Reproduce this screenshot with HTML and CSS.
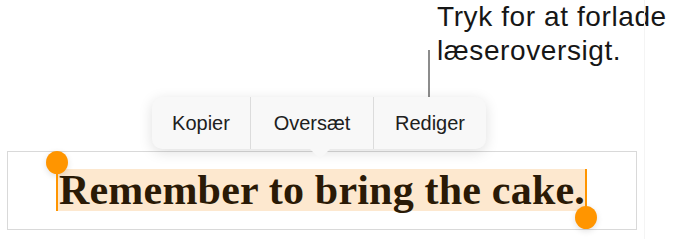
FILE: index.html
```html
<!DOCTYPE html>
<html lang="da">
<head>
<meta charset="utf-8">
<link rel="stylesheet" href="styles.css">
</head>
<body>
<div class="stage">
  <div class="callout">
    <p class="callout-text">Tryk for at forlade<br>læseroversigt.</p>
  </div>
  <div class="edge"></div>
  <div class="field">
    <span class="sel">Remember to bring the cake.</span>
  </div>
  <div class="leader"></div>
  <div class="menu">
    <div class="item item-1">Kopier</div>
    <div class="item item-2">Oversæt</div>
    <div class="item item-3">Rediger</div>
  </div>
  <div class="handle handle-start"><span class="knob"></span><span class="bar"></span></div>
  <div class="handle handle-end"><span class="bar"></span><span class="knob"></span></div>
</div>
</body>
</html>
```
FILE: styles.css
```css
html, body {
  margin: 0;
  padding: 0;
  background: #ffffff;
}
.stage {
  position: relative;
  width: 686px;
  height: 239px;
  overflow: hidden;
  font-family: "Liberation Sans", Arial, sans-serif;
}
.callout {
  padding-left: 437px;
  height: 151px;
}
.callout-text {
  margin: 0;
  padding-top: 0;
  font-size: 28px;
  line-height: 34px;
  letter-spacing: 0.6px;
  color: #161616;
}
.edge {
  position: absolute;
  left: 644px;
  top: 0;
  width: 1px;
  height: 239px;
  background: #f4f4f4;
}
.field {
  margin-left: 7px;
  width: 628px;
  height: 77px;
  border: 1px solid #d9d9d9;
  box-sizing: content-box;
  display: flex;
  align-items: flex-start;
}
.sel {
  display: block;
  box-sizing: border-box;
  width: 528px;
  margin-left: 50px;
  margin-top: 17px;
  height: 42px;
  line-height: 42px;
  padding-left: 1px;
  background: #fde8cf;
  font-family: "Liberation Serif", "Times New Roman", serif;
  font-weight: bold;
  font-size: 42px;
  letter-spacing: 0.2px;
  color: #2a1a06;
  white-space: nowrap;
}
.leader {
  position: absolute;
  left: 428px;
  top: 50px;
  width: 2px;
  height: 48px;
  background: #8c8c8c;
}
.menu {
  position: absolute;
  left: 152px;
  top: 97px;
  height: 52px;
  display: flex;
  background: #f8f8f8;
  border-radius: 10px;
  box-shadow: 0 3px 14px rgba(0, 0, 0, 0.13);
  font-size: 20px;
  color: #202020;
}
.menu::after {
  content: "";
  position: absolute;
  left: 158px;
  top: 52px;
  border-left: 10px solid transparent;
  border-right: 10px solid transparent;
  border-top: 10px solid #f8f8f8;
}
.item {
  display: flex;
  align-items: center;
  justify-content: center;
  height: 52px;
}
.item-1 { width: 98px; }
.item-2 { width: 122px; border-left: 1px solid #dcdcdc; }
.item-3 { width: 112px; border-left: 1px solid #dcdcdc; }
.handle {
  position: absolute;
  display: flex;
  flex-direction: column;
  align-items: center;
  width: 22px;
}
.handle-start {
  left: 46px;
  top: 151px;
}
.handle-end {
  left: 575px;
  top: 169px;
}
.knob {
  display: block;
  width: 22px;
  height: 23px;
  border-radius: 50%;
  background: #ff9500;
  box-shadow: 0 2px 6px rgba(0, 0, 0, 0.12);
}
.bar {
  display: block;
  width: 2px;
  background: #ff9500;
}
.handle-start .bar { height: 38px; margin-top: -1px; }
.handle-end .bar { height: 38px; margin-bottom: -1px; }
```
